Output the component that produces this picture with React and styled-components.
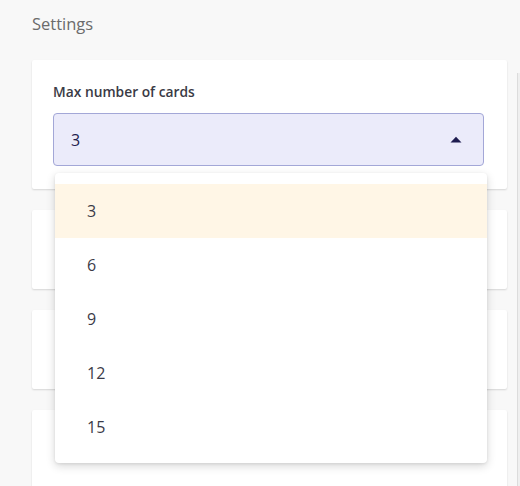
import React from 'react';
import styled, { createGlobalStyle } from 'styled-components';

const GlobalStyle = createGlobalStyle`
  html, body {
    margin: 0;
    padding: 0;
    background: #f8f8f8;
    overflow: hidden;
  }
  body {
    font-family: 'Open Sans', 'Noto Sans', sans-serif;
  }
`;

const Page = styled.div`
  width: 520px;
  height: 486px;
  box-sizing: border-box;
  padding: 0 13px 0 32px;
  background: #f8f8f8;
  position: relative;
  overflow: hidden;
`;

const ScrollRail = styled.div`
  position: absolute;
  right: 0;
  top: 73px;
  bottom: 0;
  width: 2px;
  border-left: 1px solid #dcdcdc;
  background: #efefef;
`;

const Title = styled.h2`
  margin: 0;
  padding-top: 13px;
  height: 47px;
  font-size: 16.5px;
  line-height: 22px;
  font-weight: 400;
  color: #6b6b6b;
`;

const CardList = styled.div`
  display: flex;
  flex-direction: column;
  gap: 21px;
`;

const Card = styled.div`
  background: #fff;
  border-radius: 2px;
  box-shadow: 0 1px 2px rgba(0, 0, 0, 0.14);
  height: ${(props) => props.height}px;
  box-sizing: border-box;
  padding: 22px 23px 23px 21px;
`;

const Label = styled.div`
  font-size: 13.8px;
  line-height: 20px;
  font-weight: 600;
  color: #3a3a45;
  margin-bottom: 11px;
`;

const SelectWrap = styled.div`
  position: relative;
`;

const SelectBox = styled.div`
  height: 53px;
  box-sizing: border-box;
  border: 1px solid #a3a7d7;
  border-radius: 4px;
  background: #ebebfa;
  display: flex;
  align-items: center;
  justify-content: space-between;
  padding: 0 21px 0 17px;
  font-size: 16px;
  color: #1e1c4f;
`;

const Arrow = styled.svg`
  width: 12px;
  height: 7px;
  display: block;
`;

const Menu = styled.ul`
  position: absolute;
  top: calc(100% + 7px);
  left: 2px;
  right: -3px;
  margin: 0;
  padding: 11px 0 9px;
  list-style: none;
  background: #fff;
  border-radius: 4px;
  box-shadow: 0 3px 10px rgba(0, 0, 0, 0.16), 0 1px 3px rgba(0, 0, 0, 0.08);
  z-index: 2;
`;

const Option = styled.li`
  height: 54px;
  display: flex;
  align-items: center;
  padding-left: 32px;
  font-size: 16px;
  color: #3b3b48;
  background: ${(props) => (props.active ? '#fff6e6' : '#fff')};
`;

const options = [3, 6, 9, 12, 15];

export default function App() {
  return (
    <>
      <GlobalStyle />
      <Page>
        <Title>Settings</Title>
        <CardList>
          <Card height={129}>
            <Label>Max number of cards</Label>
            <SelectWrap>
              <SelectBox>
                <span>3</span>
                <Arrow viewBox="0 0 12 7" aria-hidden="true">
                  <path d="M0.5 6.5 L6 0.8 L11.5 6.5 Z" fill="#1e1c4f" />
                </Arrow>
              </SelectBox>
              <Menu>
                {options.map((o, i) => (
                  <Option key={o} active={i === 0}>
                    {o}
                  </Option>
                ))}
              </Menu>
            </SelectWrap>
          </Card>
          <Card height={79} />
          <Card height={79} />
          <Card height={120} />
        </CardList>
        <ScrollRail />
      </Page>
    </>
  );
}
